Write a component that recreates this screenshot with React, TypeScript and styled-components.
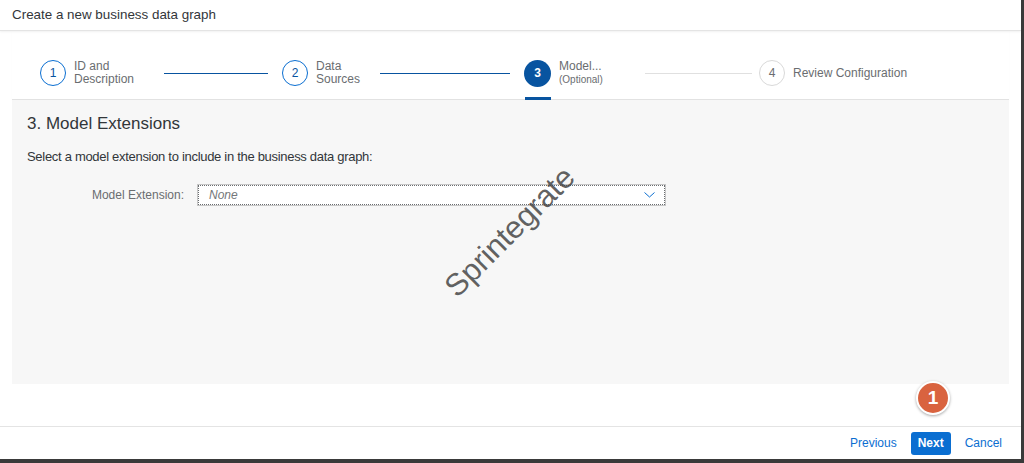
import React from "react";
import styled, { createGlobalStyle, css } from "styled-components";

const GlobalStyle = createGlobalStyle`
  html, body {
    margin: 0;
    padding: 0;
    background: #ffffff;
  }
  body {
    font-family: "Liberation Sans", Arial, sans-serif;
    color: #32363a;
  }
`;

type StepState = "done" | "active" | "todo";

const steps: { num: number; lines: string[]; state: StepState; width?: number; line?: { width: number; gap: number; state: StepState } }[] = [
  { num: 1, lines: ["ID and", "Description"], state: "done", width: 124, line: { width: 104, gap: 14, state: "done" } },
  { num: 2, lines: ["Data", "Sources"], state: "done", width: 98, line: { width: 130, gap: 14, state: "done" } },
  { num: 3, lines: ["Model...", "(Optional)"], state: "active", width: 121, line: { width: 107, gap: 7, state: "todo" } },
  { num: 4, lines: ["Review Configuration"], state: "todo" },
];

const App: React.FC = () => {
  return (
    <>
      <GlobalStyle />
      <Window>
        <Header>Create a new business data graph</Header>
        <Stepper>
          {steps.map((s) => (
            <React.Fragment key={s.num}>
              <Step $width={s.width} $active={s.state === "active"}>
                <Circle $state={s.state}>{s.num}</Circle>
                <StepLabel>
                  {s.lines.map((l, i) => (
                    <LabelLine key={l} $small={s.state === "active" && i === 1}>{l}</LabelLine>
                  ))}
                </StepLabel>
              </Step>
              {s.line && <Connector $width={s.line.width} $gap={s.line.gap} $state={s.line.state} />}
            </React.Fragment>
          ))}
        </Stepper>
        <Content>
          <Title>3. Model Extensions</Title>
          <Description>Select a model extension to include in the business data graph:</Description>
          <FormRow>
            <FieldLabel>Model Extension:</FieldLabel>
            <Select>
              <Placeholder>None</Placeholder>
              <svg width="11" height="6" viewBox="0 0 11 6">
                <path d="M0.5 0.5 L5.5 5 L10.5 0.5" fill="none" stroke="#0a6ed1" strokeWidth="1" />
              </svg>
            </Select>
          </FormRow>
        </Content>
        <Spacer />
        <Footer>
          <LinkButton>Previous</LinkButton>
          <PrimaryButton>Next</PrimaryButton>
          <LinkButton>Cancel</LinkButton>
        </Footer>
        <Watermark>Sprintegrate</Watermark>
        <Badge>1</Badge>
      </Window>
    </>
  );
};

const Window = styled.div`
  position: relative;
  width: 1024px;
  height: 463px;
  box-sizing: border-box;
  border-right: 3px solid #3a3a3a;
  border-bottom: 4px solid #3a3a3a;
  display: flex;
  flex-direction: column;
  overflow: hidden;
  background: #fff;
`;

const Header = styled.div`
  height: 31px;
  flex: none;
  display: flex;
  align-items: center;
  padding-left: 12px;
  padding-bottom: 2px;
  box-sizing: border-box;
  font-size: 13.4px;
  color: #32363a;
  border-bottom: 1px solid #e4e4e4;
  box-shadow: 0 1px 2px rgba(0, 0, 0, 0.06);
`;

const Stepper = styled.div`
  height: 69px;
  flex: none;
  margin: 0 12px;
  padding-left: 28px;
  padding-top: 12px;
  box-sizing: border-box;
  display: flex;
  align-items: stretch;
  border-bottom: 1px solid #e2e2e2;
  box-shadow: 0 1px 1px rgba(0, 0, 0, 0.04);
`;

const Step = styled.div<{ $width?: number; $active?: boolean }>`
  position: relative;
  display: flex;
  align-items: center;
  gap: 8px;
  padding-top: 4px;
  ${(p) => (p.$width ? `width: ${p.$width}px; flex: none;` : "")}
  ${(p) =>
    p.$active &&
    css`
      &::after {
        content: "";
        position: absolute;
        left: 1px;
        bottom: -1px;
        width: 26px;
        height: 3px;
        background: #0854a0;
      }
    `}
`;

const Circle = styled.div<{ $state: StepState }>`
  width: 26px;
  height: 26px;
  flex: none;
  box-sizing: border-box;
  border-radius: 50%;
  display: flex;
  align-items: center;
  justify-content: center;
  font-size: 12px;
  ${(p) =>
    p.$state === "done"
      ? css`
          border: 1px solid #0a6ed1;
          color: #0854a0;
          background: #fff;
        `
      : p.$state === "active"
      ? css`
          background: #0854a0;
          color: #fff;
          font-weight: bold;
          width: 27px;
          height: 27px;
        `
      : css`
          border: 1px solid #d9d9d9;
          color: #6a6d70;
          background: #fff;
        `}
`;

const StepLabel = styled.div`
  display: flex;
  flex-direction: column;
`;

const LabelLine = styled.span<{ $small?: boolean }>`
  font-size: ${(p) => (p.$small ? "10px" : "12px")};
  line-height: 13px;
  color: #6a6d70;
`;

const Connector = styled.div<{ $width: number; $gap: number; $state: StepState }>`
  width: ${(p) => p.$width}px;
  flex: none;
  height: 1px;
  align-self: center;
  margin-top: 4px;
  margin-right: ${(p) => p.$gap}px;
  background: ${(p) => (p.$state === "done" ? "#0854a0" : "#e0e0e0")};
`;

const Content = styled.div`
  height: 284px;
  flex: none;
  margin: 0 12px;
  padding: 14px 15px 0;
  box-sizing: border-box;
  background: #f7f7f7;
`;

const Title = styled.div`
  font-size: 17px;
  color: #32363a;
  line-height: 20px;
`;

const Description = styled.div`
  margin-top: 15px;
  font-size: 13px;
  letter-spacing: -0.3px;
  color: #32363a;
  line-height: 16px;
`;

const FormRow = styled.div`
  margin-top: 20px;
  display: flex;
  align-items: center;
  gap: 14px;
`;

const FieldLabel = styled.div`
  width: 157px;
  text-align: right;
  font-size: 12px;
  color: #6a6d70;
`;

const Select = styled.div`
  width: 467px;
  height: 20px;
  box-sizing: border-box;
  background: #fff;
  border: 1px dotted #6a6d70;
  outline: 1px solid #c6c6c6;
  display: flex;
  align-items: center;
  justify-content: space-between;
  padding: 0 9px 0 10px;
`;

const Placeholder = styled.span`
  font-size: 12px;
  font-style: italic;
  color: #74777a;
`;

const Spacer = styled.div`
  flex: 1;
`;

const Footer = styled.div`
  height: 33px;
  flex: none;
  border-top: 1px solid #e4e4e4;
  box-sizing: border-box;
  display: flex;
  align-items: center;
  justify-content: flex-end;
  gap: 14px;
  padding-right: 19px;
`;

const LinkButton = styled.span`
  font-size: 12px;
  color: #0a6ed1;
`;

const PrimaryButton = styled.span`
  width: 40px;
  height: 23px;
  display: flex;
  align-items: center;
  justify-content: center;
  border-radius: 3px;
  background: #0a6ed1;
  color: #fff;
  font-size: 12px;
  font-weight: bold;
`;

const Watermark = styled.div`
  position: absolute;
  left: 510px;
  top: 232px;
  transform: translate(-50%, -50%) rotate(-45deg);
  font-size: 31px;
  color: rgba(70, 70, 70, 0.85);
  white-space: nowrap;
  pointer-events: none;
`;

const Badge = styled.div`
  position: absolute;
  left: 916px;
  top: 381px;
  width: 34px;
  height: 34px;
  box-sizing: border-box;
  border-radius: 50%;
  border: 2px solid #fff;
  background: #d9633f;
  box-shadow: 0 1px 3px rgba(0, 0, 0, 0.35);
  color: #fff;
  font-size: 19px;
  font-weight: bold;
  display: flex;
  align-items: center;
  justify-content: center;
`;

export default App;
